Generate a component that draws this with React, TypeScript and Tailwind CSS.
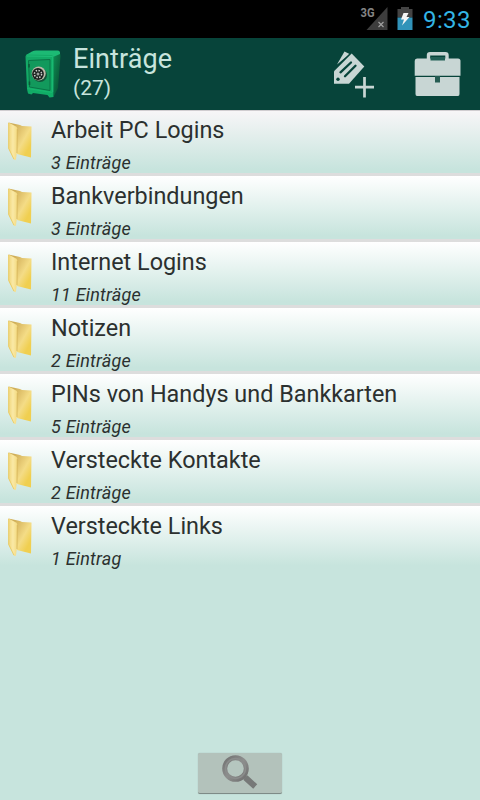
const FOLDERS = [
  { title: "Arbeit PC Logins", count: "3 Einträge" },
  { title: "Bankverbindungen", count: "3 Einträge" },
  { title: "Internet Logins", count: "11 Einträge" },
  { title: "Notizen", count: "2 Einträge" },
  { title: "PINs von Handys und Bankkarten", count: "5 Einträge" },
  { title: "Versteckte Kontakte", count: "2 Einträge" },
  { title: "Versteckte Links", count: "1 Eintrag" },
];

function SignalIcon() {
  return (
    <svg width="30" height="38" viewBox="0 0 30 38">
      <path d="M27.500 7V30H6.500Z" fill="#3d3d3d" />
      <text x="0.500" y="17" fontSize="12.500" fontWeight="700" fontFamily="Roboto, sans-serif" fill="#858585" stroke="#000" strokeWidth="2" paintOrder="stroke" textLength="14" lengthAdjust="spacingAndGlyphs">3G</text>
      <path d="M18.500 22L23.500 27M23.500 22L18.500 27" stroke="#a0a0a0" strokeWidth="1.200" />
    </svg>
  );
}

function BatteryIcon() {
  return (
    <svg width="16" height="38" viewBox="0 0 16 38">
      <path d="M4 7H12V9H15.500V17.500H0.500V9H4Z" fill="#444" />
      <path d="M0.500 17.500H15.500V30H0.500Z" fill="#3193b9" />
      <path d="M6.500 13H11.500L9.500 17H12.500L5 25.500L7 19.500H4Z" fill="#f4f4f4" />
    </svg>
  );
}

function SafeIcon() {
  return (
    <svg width="38" height="50" viewBox="0 0 38 50">
      <defs>
        <linearGradient id="safeFront" x1="0" y1="0" x2="1" y2="1">
          <stop offset="0" stopColor="#14a866" />
          <stop offset="1" stopColor="#0fae66" />
        </linearGradient>
        <linearGradient id="safeSide" x1="0" y1="0" x2="1" y2="1">
          <stop offset="0" stopColor="#0f9457" />
          <stop offset="1" stopColor="#06482e" />
        </linearGradient>
      </defs>
      <path d="M28 6L35 2.500Q36.500 3 36.500 6L34 38L30 46Z" fill="url(#safeSide)" />
      <path d="M2 5L8 1.500Q10 0.500 12 0.500H33.500Q36.500 0.500 36 4L29 7L3 6Z" fill="#1cba74" />
      <path d="M1.500 6.500Q1.500 4.500 4 4.500L27 5Q29.500 5 29.500 8V42L29.500 47L25.500 47.500L23.500 45L9 43L7.500 44.500L4 43.500L3 39Z" fill="url(#safeFront)" />
      <path d="M3 6L28.700 6.500V42" stroke="#1fbe78" strokeWidth="0.900" fill="none" />
      <path d="M4.500 10.500L26 9.500V40.500L5.500 37Z" fill="#12995c" stroke="#0a7447" strokeWidth="1" />
      <path d="M3.500 38.500L28.500 42.500" stroke="#17b86e" strokeWidth="1.200" />
      <path d="M5 14V17.500M5.500 31.500V35" stroke="#0a5a3a" strokeWidth="1.600" />
      <ellipse cx="16" cy="25" rx="7" ry="7" fill="#12553a" />
      <ellipse cx="14.700" cy="23.500" rx="7" ry="6.900" fill="#bdb8a7" />
      <ellipse cx="14" cy="24" rx="5.900" ry="5.900" fill="#18201d" />
      <circle cx="14" cy="24" r="3.600" fill="none" stroke="#c9cdc9" strokeWidth="1.500" strokeDasharray="1.500 1.330" />
      <circle cx="14" cy="24" r="1.500" fill="#9aa09d" />
    </svg>
  );
}

function AddEntryIcon() {
  return (
    <svg width="44" height="50" viewBox="0 0 44 50">
      <path d="M5 15.500L12.500 2.500L17.500 5Z" fill="#c8d6d4" />
      <path d="M6 17.500L19 4" stroke="#07443a" strokeWidth="1.300" />
      <path d="M2 22.300L19.700 4.600L32.300 17.500L17 34.700H2Z" fill="#c8d6d4" />
      <path d="M8.500 23.300L19 13.500M13 27.200L23.500 16.700" stroke="#07443a" strokeWidth="2.300" strokeLinecap="round" />
      <circle cx="6" cy="30.200" r="1.700" fill="#07443a" />
      <path d="M32.500 28V48.500M23 38.200H42" stroke="#c8d6d4" strokeWidth="2.700" />
    </svg>
  );
}

function BriefcaseIcon() {
  return (
    <svg width="48" height="46" viewBox="0 0 48 46">
      <path d="M14.500 9V4Q14.500 2.700 16 2.700H31.500Q33 2.700 33 4V9" fill="none" stroke="#c8d6d4" strokeWidth="3.400" />
      <path d="M3 7.500H44Q46.500 7.500 46.500 10V24.700H0.700V10Q0.700 7.500 3 7.500Z" fill="#c8d6d4" />
      <path d="M16.500 6H31V9.500H16.500Z" fill="#226056" />
      <path d="M1.500 26H45.500V43Q45.500 45 44 45H3Q1.500 45 1.500 43Z" fill="#c8d6d4" />
      <path d="M21 25H26V31.500H21Z" fill="#255c52" />
    </svg>
  );
}

function FolderIcon() {
  return (
    <svg width="28" height="42" viewBox="0 0 28 42">
      <defs>
        <linearGradient id="folderBack" x1="0.300" y1="0" x2="1" y2="0.600">
          <stop offset="0" stopColor="#cfae58" />
          <stop offset="0.350" stopColor="#e3c56f" />
          <stop offset="0.650" stopColor="#f4dc86" />
          <stop offset="1" stopColor="#f0cf50" />
        </linearGradient>
        <linearGradient id="folderFront" x1="0" y1="0" x2="1" y2="0">
          <stop offset="0" stopColor="#f0d67c" />
          <stop offset="0.500" stopColor="#fae9a6" />
          <stop offset="1" stopColor="#f3da80" />
        </linearGradient>
      </defs>
      <path d="M2.500 1.500L14 4L16 5L25.500 5.500L25 36.500L11 33Z" fill="url(#folderBack)" />
      <path d="M2.500 1.500L10 5.500Q11.300 6.300 11.300 8L11 30L10 38Q9.500 40.500 7.500 37.500L2.500 27.500Z" fill="url(#folderFront)" />
      <path d="M11.300 8L11 32" stroke="#d5b458" strokeWidth="0.800" />
      <path d="M2.700 2V27.500L8 38.300" stroke="#eac95f" strokeWidth="0.900" fill="none" />
    </svg>
  );
}

function SearchIcon() {
  return (
    <svg width="38" height="38" viewBox="0 0 38 38">
      <defs>
        <linearGradient id="lensRing" x1="0" y1="0" x2="1" y2="1">
          <stop offset="0" stopColor="#737373" />
          <stop offset="0.500" stopColor="#8e8f8e" />
          <stop offset="1" stopColor="#707070" />
        </linearGradient>
      </defs>
      <path d="M22 21.500L27 26" stroke="#858886" strokeWidth="3.500" />
      <path d="M26.500 25.500L32 30.500" stroke="#777978" strokeWidth="6" strokeLinecap="square" />
      <circle cx="14.500" cy="14.500" r="10.800" fill="#b5c6bf" stroke="url(#lensRing)" strokeWidth="5" />
      <circle cx="14.500" cy="14.500" r="10" fill="none" stroke="#8b8d8c" strokeWidth="1.500" />
    </svg>
  );
}

export default function App() {
  return (
    <div className="flex h-[800px] w-[480px] flex-col overflow-hidden bg-[#c7e4dd] font-[Roboto,sans-serif] text-[#2b302f]">
      <div className="flex h-[38px] shrink-0 items-center bg-black pl-[360px]">
        <SignalIcon />
        <div className="ml-[7px]"><BatteryIcon /></div>
        <span className="ml-[10px] pt-[2px] text-[24px] leading-[36px] tracking-[0.4px] text-[#33b5e5]">9:33</span>
      </div>

      <header className="flex h-[72px] shrink-0 bg-[#07443a] text-[#c7e4dd]">
        <div className="ml-[24px] mt-[12px] w-[38px]"><SafeIcon /></div>
        <div className="ml-[11px] mt-[5px] w-[248px] whitespace-nowrap">
          <h1 className="text-[27px] leading-[33px] tracking-[0.1px]">Einträge</h1>
          <p className="text-[21px] leading-[25px]">(27)</p>
        </div>
        <button className="ml-[11px] mt-[11px] h-[50px] w-[44px]"><AddEntryIcon /></button>
        <button className="ml-[38px] mt-[13px] h-[46px] w-[48px]"><BriefcaseIcon /></button>
      </header>

      <ul className="shrink-0">
        {FOLDERS.map(({ title, count }) => (
          <li
            key={title}
            className="flex h-[66px] border-b-[3px] border-[#dddddd] bg-linear-to-b from-white to-[#c7e4dd] to-90% bg-origin-border first:from-[#f8f6f8] first:shadow-[inset_0_1px_0_#d0cdd0] last:border-transparent"
          >
            <div className="ml-[6px] mt-[11px] w-[28px]"><FolderIcon /></div>
            <div className="ml-[17px] whitespace-nowrap">
              <p className="mt-[6px] text-[23.4px] leading-[28px]">{title}</p>
              <p className="mt-[8px] text-[18px] italic leading-[21px] tracking-[0.2px]">{count}</p>
            </div>
          </li>
        ))}
      </ul>

      <div className="mt-auto flex justify-center pb-[6px]">
        <button className="flex h-[41px] w-[84px] justify-center rounded-[2px] border-b border-[#7e8b87] bg-[#b3c2bb] pt-[1px] shadow-[0_0_1px_#93a39e]">
          <SearchIcon />
        </button>
      </div>
    </div>
  );
}
